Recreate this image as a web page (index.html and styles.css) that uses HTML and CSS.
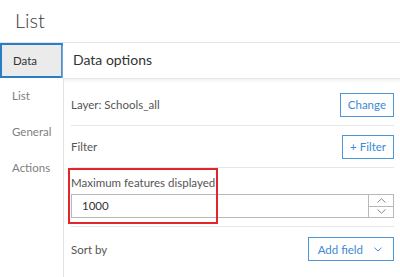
FILE: index.html
```html
<!DOCTYPE html>
<html lang="en">
<head>
  <meta charset="UTF-8">
  <title>List</title>
  <link rel="stylesheet" href="styles.css">
</head>
<body>
  <div class="panel">
    <h1 class="title">List</h1>
    <div class="layout">
      <nav class="tabs">
        <div class="tab active">Data</div>
        <div class="tab">List</div>
        <div class="tab">General</div>
        <div class="tab">Actions</div>
      </nav>
      <section class="main">
        <h2 class="section-title">Data options</h2>
        <div class="content">
          <div class="row">
            <span>Layer: Schools_all</span>
            <button class="btn">Change</button>
          </div>
          <div class="row">
            <span>Filter</span>
            <button class="btn">+ Filter</button>
          </div>
          <div class="field">
            <label class="field-label">Maximum features displayed</label>
            <div class="number">
              <span class="number-value">1000</span>
              <div class="spin">
                <span class="spin-btn">
                  <svg width="9" height="5" viewBox="0 0 9 5"><path d="M0.5 4.5 L4.5 0.8 L8.5 4.5" fill="none" stroke="#888" stroke-width="1"/></svg>
                </span>
                <span class="spin-btn">
                  <svg width="9" height="5" viewBox="0 0 9 5"><path d="M0.5 0.5 L4.5 4.2 L8.5 0.5" fill="none" stroke="#888" stroke-width="1"/></svg>
                </span>
              </div>
            </div>
            <div class="highlight"></div>
          </div>
          <div class="row last">
            <span>Sort by</span>
            <button class="btn btn-drop">Add field
              <svg width="8" height="5" viewBox="0 0 9 5"><path d="M0.5 0.5 L4.5 4.2 L8.5 0.5" fill="none" stroke="#3b8ad3" stroke-width="1.1"/></svg>
            </button>
          </div>
        </div>
      </section>
    </div>
  </div>
</body>
</html>
```

FILE: styles.css
```css
body { margin: 0; font-family: Lato, "Open Sans", sans-serif; color: #555; background: #fff; }
.panel { width: 400px; height: 277px; overflow: hidden; }
.title { margin: 0; height: 42px; line-height: 40px; padding-left: 15px; font-size: 20px; font-weight: 300; color: #3a3a3a; border-bottom: 1px solid #e3e3e3; }

.layout { display: grid; grid-template-columns: 63px 1fr; }
.tabs { display: flex; flex-direction: column; }
.tab { height: 36px; line-height: 36px; padding-left: 12px; font-size: 11.5px; color: #808080; }
.tab.active { height: 35px; line-height: 31px; box-sizing: border-box; border: 2px solid #2a7fc4; background: #ebebeb; color: #333; padding-left: 11px; }

.main { display: flex; flex-direction: column; }
.section-title { margin: 0; height: 35px; line-height: 34px; padding-left: 10px; font-size: 14px; font-weight: 400; color: #333; border-bottom: 1px solid #e6e6e6; box-shadow: 0 2px 3px #f0f0f0; }
.content { border-left: 1px solid #e3e3e3; padding: 5px 6px 0 7px; height: 200px; }

.row { display: flex; align-items: center; justify-content: space-between; height: 41px; border-bottom: 1px solid #e6e6e6; font-size: 11.5px; }
.row.last { border-bottom: none; height: 44px; }

.btn { font-family: inherit; font-size: 11.5px; color: #3b8ad3; background: #fff; border: 1px solid #4a96d8; height: 24px; padding: 0 7px; }
.btn-drop { display: flex; align-items: center; gap: 11px; padding: 0 11px 0 9px; }

.field { position: relative; padding: 8px 0 8px; border-bottom: 1px solid #e6e6e6; }
.field-label { display: block; font-size: 11.5px; margin-bottom: 5px; }
.number { display: flex; height: 24px; border: 1px solid #b8b8b8; box-sizing: border-box; }
.number-value { flex: 1; font-size: 11.5px; line-height: 22px; padding-left: 10px; color: #333; }
.spin { width: 24px; display: flex; flex-direction: column; border-left: 1px solid #b8b8b8; }
.spin-btn { flex: 1; display: flex; align-items: center; justify-content: center; }
.spin-btn + .spin-btn { border-top: 1px solid #b8b8b8; }
.highlight { position: absolute; left: -3px; top: 0; width: 146px; height: 52px; border: 2px solid #e3262d; }
```
